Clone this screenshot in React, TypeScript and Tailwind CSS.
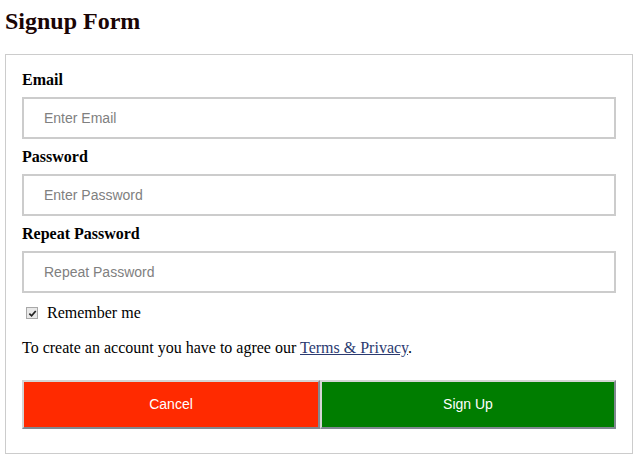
import { useState } from "react";

const serif = { fontFamily: '"Liberation Serif", "Times New Roman", serif' };

function Field({ label, type, placeholder }: { label: string; type: string; placeholder: string }) {
  return (
    <div className="flex flex-col">
      <label className="text-[16px] leading-[18px] font-bold text-black">{label}</label>
      <input
        type={type}
        placeholder={placeholder}
        className="mt-2 mb-[9px] h-[42px] w-full border-2 border-[#cccccc] bg-white pl-[20px] text-[14px] text-black outline-none placeholder:text-[#808080] font-['Liberation_Sans',Arial,sans-serif]"
      />
    </div>
  );
}

export default function App() {
  const [remember, setRemember] = useState(true);

  return (
    <div className="min-h-[462px] w-[638px] bg-white px-[5px] text-black" style={serif}>
      <h2 className="pt-[7px] text-[24px] leading-[28px] font-bold text-[#1a0505]">Signup Form</h2>
      <form
        className="mt-[19px] w-[628px] border border-[#cccccc] px-4 pt-4 pb-4"
        onSubmit={(e) => e.preventDefault()}
      >
        <Field label="Email" type="text" placeholder="Enter Email" />
        <Field label="Password" type="password" placeholder="Enter Password" />
        <Field label="Repeat Password" type="password" placeholder="Repeat Password" />

        <label
          className="mt-[2px] flex h-[18px] cursor-pointer items-center text-[16px] leading-[18px]"
          onClick={() => setRemember(!remember)}
        >
          <span className="ml-[4px] mr-[9px] flex h-[12px] w-[12px] items-center justify-center border border-[#a8a8a8] bg-[#e8e8e8]">
            {remember && (
              <svg viewBox="0 0 10 10" className="h-[9px] w-[9px]">
                <path d="M1.5 5.2 L4 7.6 L8.6 2.2" fill="none" stroke="#222" strokeWidth="1.9" />
              </svg>
            )}
          </span>
          Remember me
        </label>

        <p className="mt-[17px] text-[16px] leading-[18px]">
          To create an account you have to agree our{" "}
          <a href="#" className="text-[#2b3a70] underline">
            Terms &amp; Privacy
          </a>
          .
        </p>

        <div className="mt-[23px] mb-2 flex">
          <button
            type="button"
            className="h-[49px] w-[298px] border-2 border-t-[#d4d4d4] border-l-[#d4d4d4] border-r-[#808890] border-b-[#808890] bg-[#ff2a00] text-[14px] text-white font-['Liberation_Sans',Arial,sans-serif]"
          >
            Cancel
          </button>
          <button
            type="submit"
            className="h-[49px] w-[296px] border-2 border-t-[#d4d4d4] border-l-[#d4d4d4] border-r-[#808890] border-b-[#808890] bg-[#007d00] text-[14px] text-white font-['Liberation_Sans',Arial,sans-serif]"
          >
            Sign Up
          </button>
        </div>
      </form>
    </div>
  );
}
